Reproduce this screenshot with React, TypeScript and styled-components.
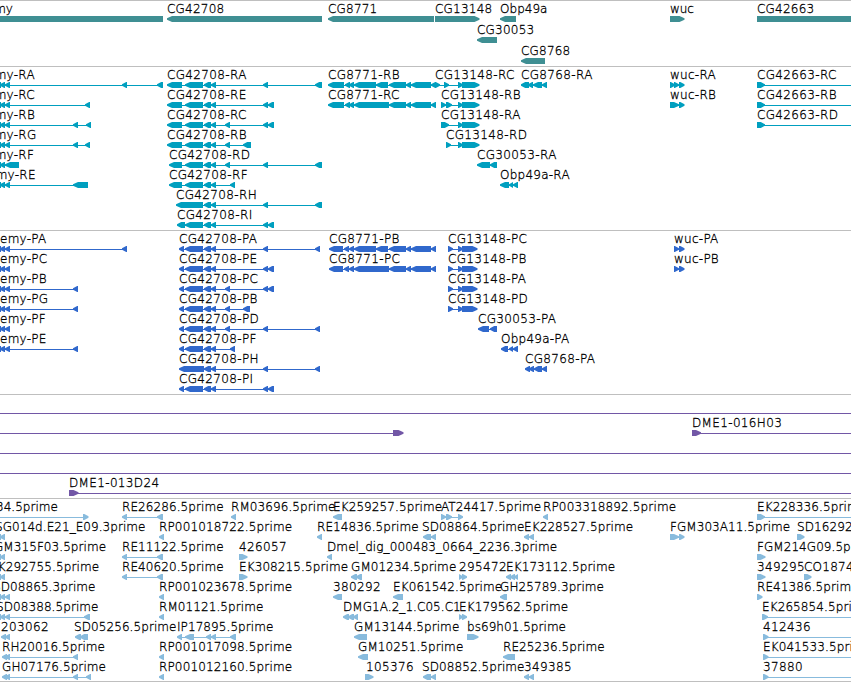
import React from 'react';
import styled, { createGlobalStyle } from 'styled-components';

const GlobalStyle = createGlobalStyle`
  body {
    margin: 0;
    background: #fff;
  }
`;

const Browser = styled.main`
  width: 851px;
  height: 682px;
  box-sizing: border-box;
  overflow: hidden;
  display: flex;
  flex-direction: column;
  border-bottom: 1px solid #bfbfbf;
`;

const TrackPanel = styled.section<{ $color: string; $end: number }>`
  border-top: 1px solid #bfbfbf;
  padding: 1px 0 ${(p) => p.$end}px;
  color: ${(p) => p.$color};
`;

const Row = styled.div<{ $height: number }>`
  height: ${(p) => p.$height}px;
  display: flex;
  flex-direction: column;
`;

const LabelLine = styled.div`
  position: relative;
  height: 14px;
  flex: none;
`;

// labels sit at the genome position of their feature and may overlap
const Label = styled.span<{ $x: number; $spacing: number }>`
  position: absolute;
  top: 0;
  left: ${(p) => p.$x}px;
  color: #000;
  font-family: 'DejaVu Sans', sans-serif;
  font-size: 12px;
  font-weight: 200;
  line-height: 14px;
  letter-spacing: ${(p) => p.$spacing}px;
  white-space: nowrap;
  -webkit-text-stroke: 0.3px #000;
`;

const Glyphs = styled.svg`
  display: block;
  flex: none;
  fill: currentColor;
`;

type Dir = '<' | '>' | '-';
type Segment = [number, number];
type Feature = {
  label: string;
  x: number;
  dir: Dir;
  segs: Segment[];
  line?: Segment;
};
type TrackData = {
  color: string;
  end: number;
  rowHeight?: number;
  rows: Feature[][];
};

const f = (
  label: string,
  x: number,
  dir: Dir,
  segs: Segment[],
  line?: Segment,
): Feature => ({ label, x, dir, segs, line });

const OFF = 860;

const emyHead: Segment[] = [[-4, 1], [0, 5], [5, 10]];
const emy = (name: string, x: number, ...rest: Segment[]) =>
  f(`emy-${name}`, x, '<', [...emyHead, ...rest]);

const cg42708Mid: Segment[] = [[204, 211], [211, 216]];
const cg42708 = (
  name: string,
  x: number,
  first: Segment[],
  ...rest: Segment[]
) => f(`CG42708-${name}`, x, '<', [...first, ...cg42708Mid, ...rest]);

const wideStart: Segment[] = [[167, 182], [185, 203]];
const shortStart: Segment[] = [[169, 182], [185, 203]];
const codingStart: Segment[] = [[179, 184], [185, 203]];

const cg8771Tail: Segment[] = [[389, 406], [406, 411], [411, 431]];
const cg13148Tail: Segment[] = [[458, 463], [462, 479.5]];
const cg13148Coding: Segment[] = [[448, 453], [458, 463], [462, 477.5]];

const clone = (line: Segment) => f('', 0, '-', [], line);

const tracks: TrackData[] = [
  {
    color: '#3f8f93',
    end: 1,
    rowHeight: 21,
    rows: [
      [
        f('emy', -13, '-', [[-10, 163]]),
        f('CG42708', 167, '<', [[167, 322]]),
        f('CG8771', 328, '<', [[328, 434]]),
        f('CG13148', 435, '>', [[435, 479.5]]),
        f('Obp49a', 500, '<', [[500, 516]]),
        f('wuc', 670, '>', [[670, 684.5]]),
        f('CG42663', 757, '>', [[757, OFF]]),
      ],
      [f('CG30053', 477, '<', [[477, 497]])],
      [f('CG8768', 521, '<', [[521, 545]])],
    ],
  },
  {
    color: '#009fbf',
    end: 2,
    rows: [
      [
        emy('RA', -13, [122, 127], [157, 163]),
        cg42708('RA', 167, wideStart, [263, 268], [315, 322]),
        f('CG8771-RB', 328, '<', [
          [328, 344], [345, 350], [349, 354], [354, 376], [376, 388],
          ...cg8771Tail, [431, 436],
        ]),
        f('CG13148-RC', 435, '>', [[435, 440], [444, 449], ...cg13148Tail]),
        f('CG8768-RA', 521, '<', [[521, 529], [528, 533], [533, 542], [542, 547]]),
        f('wuc-RA', 670, '>', [[670, 675], [674, 679], [679, 684.5]]),
        f('CG42663-RC', 757, '>', [[757, 765]], [757, OFF]),
      ],
      [
        emy('RC', -13, [85, 90]),
        cg42708('RE', 167, wideStart, [263, 268], [268, 274]),
        f('CG8771-RC', 328, '<', [
          [328, 344], [345, 350], [349, 354], [354, 389],
          ...cg8771Tail, [431, 436],
        ]),
        f('CG13148-RB', 441, '>', [[441, 446], [446, 452], ...cg13148Tail]),
        f('wuc-RB', 670, '>', [[670, 679], [679, 684.5]]),
        f('CG42663-RB', 757, '>', [[757, 765]], [757, OFF]),
      ],
      [
        emy('RB', -13, [73, 78], [86, 91]),
        cg42708('RC', 167, wideStart, [225, 230], [263, 268], [268, 274]),
        f('CG13148-RA', 441, '>', [[441, 449], ...cg13148Tail]),
        f('CG42663-RD', 757, '>', [[757, 765]], [757, OFF]),
      ],
      [
        emy('RG', -13, [73, 78], [85, 90]),
        cg42708('RB', 167, wideStart, [225, 230], [243, 251]),
        f('CG13148-RD', 446, '>', [[446, 451], ...cg13148Tail]),
      ],
      [
        f('emy-RF', -13, '<', [[-4, 1], [0, 5], [5, 19]]),
        cg42708('RD', 169, shortStart, [225, 230], [263, 268], [315, 322]),
        f('CG30053-RA', 477, '<', [[477, 490], [490, 497]]),
      ],
      [
        emy('RE', -12, [73, 88]),
        cg42708('RF', 169, shortStart, [230, 235]),
        f('Obp49a-RA', 500, '<', [[500, 509], [509, 513], [513, 518]]),
      ],
      [cg42708('RH', 176, [[176, 203]], [263, 268], [315, 322])],
      [cg42708('RI', 177, [[177, 185], [185, 203]], [263, 268], [268, 274])],
    ],
  },
  {
    color: '#3068cc',
    end: 2,
    rows: [
      [
        emy('PA', 0, [122, 127]),
        cg42708('PA', 179, codingStart, [263, 268], [315, 320]),
        f('CG8771-PB', 329, '<', [
          [329, 343], [344, 349], [349, 354], [354, 376], [376, 388],
          ...cg8771Tail, [431, 436],
        ]),
        f('CG13148-PC', 448, '>', cg13148Coding),
        f('wuc-PA', 674, '>', [[674, 679], [679, 684.5]]),
      ],
      [
        emy('PC', 0),
        cg42708('PE', 179, codingStart, [263, 268], [268, 274]),
        f('CG8771-PC', 329, '<', [
          [329, 343], [344, 349], [349, 354], [354, 389],
          ...cg8771Tail, [431, 436],
        ]),
        f('CG13148-PB', 448, '>', cg13148Coding),
        f('wuc-PB', 674, '>', [[674, 679], [679, 684.5]]),
      ],
      [
        emy('PB', 0, [73, 78]),
        cg42708('PC', 179, codingStart, [225, 230], [263, 268], [268, 274]),
        f('CG13148-PA', 448, '>', cg13148Coding),
      ],
      [
        emy('PG', 0, [73, 78]),
        cg42708('PB', 179, codingStart, [225, 230], [243, 250]),
        f('CG13148-PD', 448, '>', cg13148Coding),
      ],
      [
        emy('PF', 0),
        cg42708('PD', 179, codingStart, [225, 230], [263, 268], [315, 320]),
        f('CG30053-PA', 478, '<', [[478, 489], [490, 497]]),
      ],
      [
        emy('PE', 0, [73, 78]),
        cg42708('PF', 179, codingStart, [230, 235]),
        f('Obp49a-PA', 501, '<', [[501, 508], [509, 513], [513, 518]]),
      ],
      [
        cg42708('PH', 179, [[179, 204]], [263, 268], [315, 320]),
        f('CG8768-PA', 525, '<', [[525, 530], [529, 534], [534, 542], [542, 547]]),
      ],
      [cg42708('PI', 179, codingStart, [263, 268], [268, 274])],
    ],
  },
  {
    color: '#7257a6',
    end: 2,
    rows: [
      [clone([0, OFF])],
      [
        f('', 0, '>', [[393, 403.5]], [0, 400]),
        f('DME1-016H03', 692, '>', [[692, 701]], [692, OFF]),
      ],
      [clone([0, OFF])],
      [clone([0, OFF])],
      [f('DME1-013D24', 69, '>', [[69, 78.5]], [69, OFF])],
    ],
  },
  {
    color: '#88bbdd',
    end: 1,
    rows: [
      [
        f('34.5prime', -4, '>', [[83, 88.5]], [0, 86]),
        f('RE26286.5prime', 122, '<', [[122, 127], [157, 163]]),
        f('RM03696.5prime', 231, '<', [[231, 236]]),
        f('EK259257.5prime', 333, '<', [[333, 342]]),
        f('AT24417.5prime', 441, '>', [[441, 446], [446, 452], [458, 463]]),
        f('RP003318892.5prime', 543, '<', [[543, 548]]),
        f('EK228336.5prime', 757, '>', [[757, 765]], [757, OFF]),
      ],
      [
        f('SG014d.E21_E09.3prime', -5, '<', [[-4, 1], [0, 5]]),
        f('RP001018722.5prime', 159, '<', [[159, 164]]),
        f('RE14836.5prime', 317, '<', [[317, 322]]),
        f('SD08864.5prime', 422, '<', [[423, 431], [431, 436]]),
        f('EK228527.5prime', 524, '<', [[524, 529], [529, 534]]),
        f('FGM303A11.5prime', 670, '>', [[670, 679], [679, 684.5]]),
        f('SD16292.5prime', 797, '>', [[797, 804.5]]),
      ],
      [
        f('GM315F03.5prime', -6, '<', [[-4, 1], [0, 5]]),
        f('RE11122.5prime', 122, '<', [[122, 127], [157, 163]]),
        f('426057', 239, '>', [[239, 247.5]]),
        f('Dmel_dig_000483_0664_2236.3prime', 327, '<', [[327, 332]]),
        f('FGM214G09.5prime', 757, '>', [[757, 765.5]]),
      ],
      [
        f('EK292755.5prime', -10, '<', [[-4, 1], [0, 5]]),
        f('RE40620.5prime', 122, '<', [[122, 127], [157, 163]]),
        f('EK308215.5prime', 239, '>', [[239, 247.5]]),
        f('GM01234.5prime', 351, '<', [[351, 357], [356, 362]]),
        f('295472', 459, '>', [[459, 463], [462, 467]]),
        f('EK173112.5prime', 506, '<', [[506, 511], [510, 515], [514, 518]]),
        f('349295', 757, '>', [[757, 765.5]]),
        f('CO187461', 804, '>', [[804, 811.5]]),
      ],
      [
        f('SD08865.3prime', -7, '<', emyHead),
        f('RP001023678.5prime', 159, '<', [[159, 164]]),
        f('380292', 333, '<', [[333, 342]]),
        f('EK061542.5prime', 393, '<', [[393, 403]]),
        f('GH25789.3prime', 500, '<', [[500, 507]]),
        f('RE41386.5prime', 757, '>', [[757, 762.5]]),
      ],
      [
        f('SD08388.5prime', -4, '<', [...emyHead, [84, 90]]),
        f('RM01121.5prime', 159, '<', [[159, 164]]),
        f('DMG1A.2_1.C05.C1', 343, '<', [[343, 349], [348, 354], [353, 358]]),
        f('EK179562.5prime', 459, '>', [[459, 463], [462, 467]]),
        f('EK265854.5prime', 762, '>', [[762, 768]], [762, OFF]),
      ],
      [
        f('203062', 1, '<', [[1, 6], [5, 10]]),
        f('SD05256.5prime', 74, '<', [[75, 81], [80, 88]]),
        f('IP17895.5prime', 177, '<', [
          [177, 182], [185, 194], [206, 211], [211, 216], [230, 236],
        ]),
        f('GM13144.5prime', 354, '<', [[354, 367]]),
        f('bs69h01.5prime', 467, '>', [[467, 478.5]]),
        f('412436', 763, '>', [[763, 768.5]], [763, OFF]),
      ],
      [
        f('RH20016.5prime', 2, '<', [[2, 7], [5, 10], [73, 78]]),
        f('RP001017098.5prime', 159, '<', [[159, 164]]),
        f('GM10251.5prime', 358, '<', [[358, 368]]),
        f('RE25236.5prime', 503, '<', [[503, 515]]),
        f('EK041533.5prime', 763, '>', [[763, 768.5]], [763, OFF]),
      ],
      [
        f('GH07176.5prime', 2, '<', [[2, 7], [5, 10], [73, 78], [86, 91]]),
        f('RP001012160.5prime', 159, '<', [[159, 164]]),
        f('105376', 366, '>', [[365, 373.5]]),
        f('SD08852.5prime', 422, '<', [[423, 431], [431, 436]]),
        f('349385', 524, '<', [[524, 529], [529, 534]]),
        f('37880', 763, '>', [[763, 768.5]], [763, OFF]),
      ],
    ],
  },
];

// digits and dashes are set wider than letters
const labelSpacing = (label: string) => {
  const total = [...label].reduce((sum, c) => {
    if (c === '-') return sum + 2.2;
    return sum + (/\d/.test(c) ? 0.36 : -0.13);
  }, 0);
  return Number((total / label.length).toFixed(3));
};

// arrow heads have a blunt tip, so that the small ones stay visible
const segmentPoints = (dir: Dir, [a, b]: Segment) => {
  const head = b - a > 8 ? 5 : Math.min(4.2, b - a);
  if (dir === '<') {
    return `${a},2.2 ${a + head},0 ${b},0 ${b},6 ${a + head},6 ${a},3.8`;
  }
  if (dir === '>') {
    return `${a},0 ${b - head},0 ${b},2.2 ${b},3.8 ${b - head},6 ${a},6`;
  }
  return `${a},0 ${b},0 ${b},6 ${a},6`;
};

const FeatureGlyph = ({ dir, segs, line }: Feature) => {
  const [from, to] = line ?? [segs[0][0] + 2, segs[segs.length - 1][1] - 2];

  return (
    <g>
      <rect
        x={from}
        y={3}
        width={to - from}
        height={1}
        shapeRendering="crispEdges"
      />
      {segs.map((seg, i) => (
        <polygon key={i} points={segmentPoints(dir, seg)} />
      ))}
    </g>
  );
};

const Track = ({ color, end, rowHeight = 20, rows }: TrackData) => (
  <TrackPanel $color={color} $end={end}>
    {rows.map((features, i) => (
      <Row key={i} $height={rowHeight}>
        <LabelLine>
          {features
            .filter((feature) => feature.label !== '')
            .map((feature) => (
              <Label
                key={feature.label}
                $x={feature.x}
                $spacing={labelSpacing(feature.label)}
              >
                {feature.label}
              </Label>
            ))}
        </LabelLine>
        <Glyphs width={851} height={6}>
          {features.map((feature, j) => (
            <FeatureGlyph key={j} {...feature} />
          ))}
        </Glyphs>
      </Row>
    ))}
  </TrackPanel>
);

const App = () => (
  <>
    <GlobalStyle />
    <Browser>
      {tracks.map((track) => (
        <Track key={track.color} {...track} />
      ))}
    </Browser>
  </>
);

export default App;
